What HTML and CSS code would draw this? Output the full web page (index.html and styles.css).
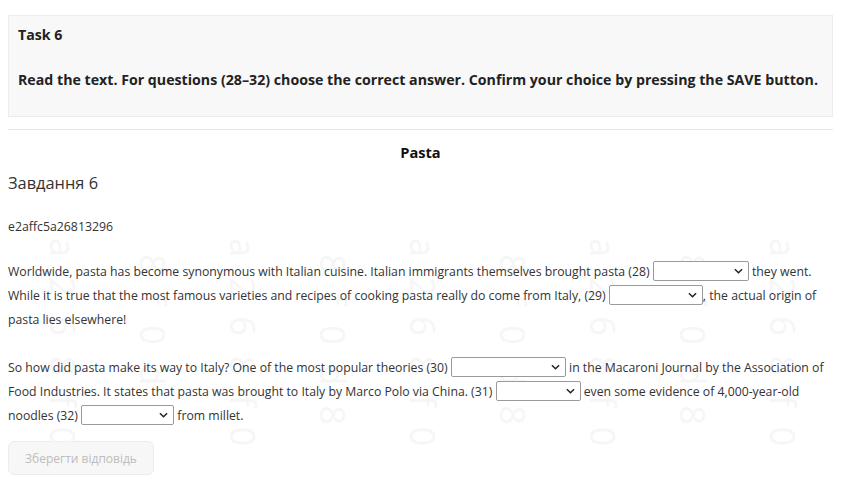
FILE: index.html
```html
<!DOCTYPE html>
<html lang="en">
<head>
<meta charset="utf-8">
<link rel="stylesheet" href="styles.css">
</head>
<body>
<div class="page">
  <div class="task-box">
    <div class="task-title">Task 6</div>
    <div class="task-instr">Read the text. For questions (28–32) choose the correct answer. Confirm your choice by pressing the SAVE button.</div>
  </div>
  <hr class="divider">
  <div class="text-title">Pasta</div>
  <h2 class="subtitle">Завдання 6</h2>
  <div class="code">e2affc5a26813296</div>
  <div class="content">
    <div class="watermark" aria-hidden="true">
      <span class="c1">a268f0</span><span class="c2">c8f0d8</span><span class="c1">a268f0</span><span class="c2">c8f0d8</span><span class="c1">a268f0</span><span class="c2">c8f0d8</span><span class="c1">a268f0</span><span class="c2">c8f0d8</span><span class="c1">a268f0</span>
    </div>
    <p class="para">Worldwide, pasta has become synonymous with Italian cuisine. Italian immigrants themselves brought pasta (28) <span class="sel w95"><svg viewBox="0 0 10 6" width="9" height="6"><path d="M1 1l4 4 4-4" fill="none" stroke="#222" stroke-width="1.6"/></svg></span> they went. While it is true that the most famous varieties and recipes of cooking pasta really do come from Italy, (29) <span class="sel w94"><svg viewBox="0 0 10 6" width="9" height="6"><path d="M1 1l4 4 4-4" fill="none" stroke="#222" stroke-width="1.6"/></svg></span>, the actual origin of pasta lies elsewhere!</p>
    <p class="para">So how did pasta make its way to Italy? One of the most popular theories (30) <span class="sel w114"><svg viewBox="0 0 10 6" width="9" height="6"><path d="M1 1l4 4 4-4" fill="none" stroke="#222" stroke-width="1.6"/></svg></span> in the Macaroni Journal by the Association of Food Industries. It states that pasta was brought to Italy by Marco Polo via China. (31) <span class="sel w84"><svg viewBox="0 0 10 6" width="9" height="6"><path d="M1 1l4 4 4-4" fill="none" stroke="#222" stroke-width="1.6"/></svg></span> even some evidence of 4,000-year-old noodles (32) <span class="sel w92"><svg viewBox="0 0 10 6" width="9" height="6"><path d="M1 1l4 4 4-4" fill="none" stroke="#222" stroke-width="1.6"/></svg></span> from millet.</p>
  </div>
  <button class="save" disabled>Зберегти відповідь</button>
</div>
</body>
</html>
```
FILE: styles.css
```css
* { box-sizing: border-box; }
html, body { margin: 0; padding: 0; background: #fff; overflow: hidden; }
body {
  font-family: "Open Sans", "Noto Sans", sans-serif;
  color: #333;
}
.page {
  width: 825px;
  margin-left: 8px;
  padding-top: 15px;
}
.task-box {
  background: #f8f8f8;
  border: 1px solid #ececec;
  padding: 10px 2px 27px 9px;
  color: #222;
  font-weight: 700;
  font-size: 14.2px;
}
.task-title { line-height: 18px; }
.task-instr { line-height: 18px; margin-top: 27px; white-space: nowrap; }
.divider {
  border: 0;
  border-top: 1px solid #e8e8e8;
  margin: 12px 0 0;
}
.text-title {
  text-align: center;
  font-weight: 700;
  font-size: 14.6px;
  color: #111;
  line-height: 18px;
  margin-top: 13px;
}
.subtitle {
  font-weight: 400;
  font-size: 16.4px;
  line-height: 22px;
  margin: 11px 0 0;
  color: #333;
}
.code {
  font-size: 12.3px;
  line-height: 16px;
  margin-top: 25px;
}
.content { position: relative; margin-top: 25px; }
.watermark {
  position: absolute;
  left: 0;
  right: 0;
  top: -22px;
  height: 210px;
  overflow: hidden;
  display: flex;
  padding-left: 38px;
  gap: 56px;
  pointer-events: none;
  z-index: 0;
}
.watermark span {
  display: block;
  writing-mode: vertical-rl;
  font-size: 34px;
  line-height: 34px;
  letter-spacing: 20px;
  color: #f6f6f6;
  flex: none;
}
.watermark .c2 { margin-top: -20px; }
.para {
  position: relative;
  z-index: 1;
  font-size: 12.25px;
  line-height: 24px;
  margin: 0 0 24px;
  color: #333;
}
.para:last-child { margin-bottom: 13px; }
.sel {
  display: inline-flex;
  align-items: center;
  justify-content: flex-end;
  height: 20px;
  vertical-align: middle;
  border: 1px solid #9a9a9a;
  border-radius: 2px;
  background: #fff;
  padding-right: 5px;
  margin-top: -3px;
}
.sel svg { display: block; }
.w95 { width: 96px; }
.w94 { width: 94px; }
.w114 { width: 115px; }
.w84 { width: 85px; }
.w92 { width: 93px; }
.save {
  display: block;
  margin-top: 0;
  width: 146px;
  height: 34px;
  background: #f7f7f7;
  border: 1px solid #ececec;
  border-radius: 6px;
  font-family: "Open Sans", "Noto Sans", sans-serif;
  font-size: 12px;
  color: #bdbdbd;
}
```
